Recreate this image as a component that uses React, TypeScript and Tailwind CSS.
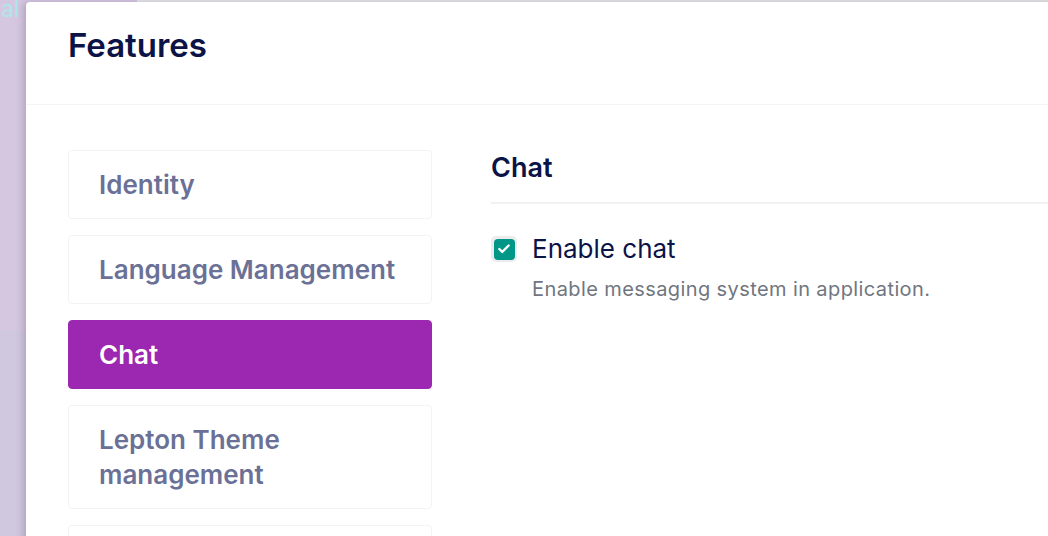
import { Check } from "lucide-react";

const items = [
  { label: "Identity", active: false },
  { label: "Language Management", active: false },
  { label: "Chat", active: true },
  { label: "Lepton Theme management", active: false },
  { label: "Saas", active: false },
];

export default function App() {
  return (
    <div
      className="relative w-[1048px] h-[536px] overflow-hidden"
      style={{ fontFamily: "Inter, 'Noto Sans', sans-serif" }}
    >
      {/* backdrop page */}
      <div className="flex flex-col h-full">
        <div className="flex h-[330px]">
          <div className="w-[137px] bg-[#d6c7e0] text-[#aee6ec] text-[23px] leading-[24px] pl-[1px] -mt-[3px]">
            al
          </div>
          <div className="flex-1 bg-[#e7e7e7]" />
        </div>
        <div className="flex-1 bg-[#d0c8de]" />
      </div>

      {/* modal */}
      <div className="absolute left-[26px] top-[2px] w-[1040px] h-[560px] bg-white rounded-tl-[4px] shadow-[-3px_0_7px_rgba(80,60,110,0.25)]">
        <div className="h-[103px] border-b border-[#f4f4f6] pl-[42px] pt-[23px]">
          <h1 className="text-[33px] leading-[40px] font-semibold text-[#0c1346]">Features</h1>
        </div>

        <div className="flex pl-[42px] pt-[45px] gap-[59px]">
          <nav className="w-[364px] flex flex-col gap-[16px] shrink-0">
            {items.map((it) => (
              <div
                key={it.label}
                className={`rounded-[4px] border pl-[30px] pr-4 py-[16px] text-[26px] leading-[35px] font-semibold ${
                  it.active
                    ? "bg-[#9c27b0] border-[#9c27b0] text-white"
                    : "border-[#f3f3f5] text-[#6b7196]"
                }`}
              >
                {it.label}
              </div>
            ))}
          </nav>

          <div className="flex-1">
            <div className="border-b-2 border-[#f1f1f3] pb-[16px]">
              <h2 className="text-[27px] leading-[36px] font-semibold text-[#0c1346]">Chat</h2>
            </div>
            <div className="mt-[30px] flex items-center gap-[15px]">
              <div className="w-[26px] h-[26px] rounded-[5px] bg-[#ececec] flex items-center justify-center shrink-0">
                <div className="w-[21px] h-[21px] rounded-[4px] bg-[#009688] flex items-center justify-center">
                  <Check size={14} strokeWidth={4} className="text-white" />
                </div>
              </div>
              <div className="text-[26px] leading-[30px] text-[#0c1346]">Enable chat</div>
            </div>
            <div className="ml-[41px] mt-[11px] text-[20px] leading-[28px] tracking-[0.4px] text-[#70767f]">
              Enable messaging system in application.
            </div>
          </div>
        </div>
      </div>
    </div>
  );
}
